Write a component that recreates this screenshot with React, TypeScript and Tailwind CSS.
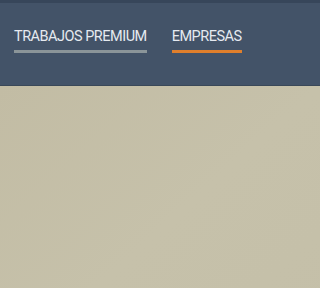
export default function App() {
  return (
    <div className="w-full h-screen overflow-hidden bg-[#c3bea6] font-['Roboto',sans-serif]">
      <div className="h-[3px] bg-[#37465a]" />
      <header className="h-[83px] bg-[#435368] border-b border-[#3a4858] flex items-start gap-[25px] pl-[14px] pt-[26px]">
        <a className="flex flex-col text-[14.5px] leading-[16px] tracking-[-0.5px] text-[#e6eaf0]">
          TRABAJOS PREMIUM
          <span className="mt-[5px] h-[3px] bg-[#8b9599]" />
        </a>
        <a className="flex flex-col text-[14.5px] leading-[16px] tracking-[-0.5px] text-[#e6eaf0]">
          EMPRESAS
          <span className="mt-[5px] h-[3px] bg-[#e07f2c]" />
        </a>
      </header>
      <div className="h-full bg-gradient-to-br from-[#c2bca4] via-[#c6c1aa] to-[#c4bfa8]" />
    </div>
  );
}
